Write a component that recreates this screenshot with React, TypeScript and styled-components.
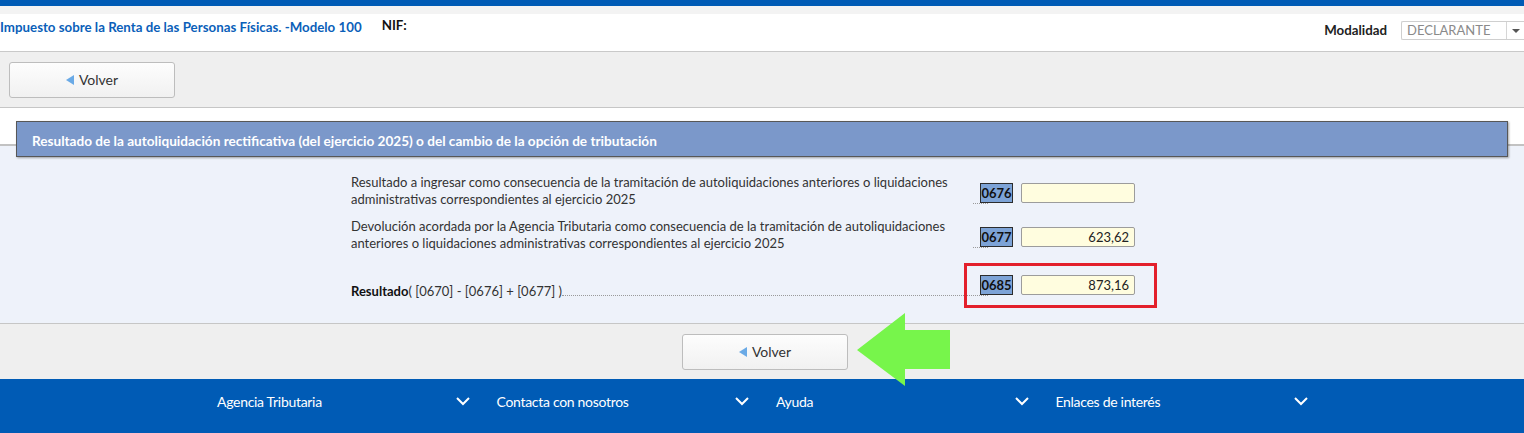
import * as React from "react";
import styled, { createGlobalStyle } from "styled-components";

const aeatBlue = "#005bb5";
const font = `"Lato", "Noto Sans", sans-serif`;

const GlobalStyle = createGlobalStyle`
  html, body {
    margin: 0;
    padding: 0;
    background: #fff;
    font-family: ${font};
  }
`;

const Page = styled.div`
  width: 1524px;
  height: 433px;
  overflow: hidden;
  display: flex;
  flex-direction: column;
`;

const TopStripe = styled.div`
  height: 6px;
  background: ${aeatBlue};
  border-bottom: 8px solid #f3f3f3;
`;

const Header = styled.div`
  height: 32px;
  display: flex;
  align-items: flex-start;
  padding-top: 5px;
  border-bottom: 1px solid #c9c9c9;
  font-size: 13.3px;
  line-height: 17px;
  .title {
    color: #0b5fb9;
    font-weight: 700;
  }
  .nif {
    margin-left: 20px;
    font-weight: 700;
    color: #111;
    margin-top: -2px;
  }
  .modalidad {
    margin-left: auto;
    display: flex;
    align-items: center;
    gap: 14px;
    margin-top: 2px;
    font-weight: 700;
    color: #222;
    margin-right: -1px;
  }
`;

const Select = styled.div`
  width: 124px;
  height: 19px;
  border: 1px solid #cfcfcf;
  border-right: none;
  border-radius: 2px 0 0 2px;
  display: flex;
  align-items: center;
  font-weight: 400;
  color: #8a8a8a;
  font-size: 13px;
  padding-left: 5px;
  box-sizing: border-box;
  background: #fff;
  span {
    flex: 1;
  }
  i {
    width: 18px;
    height: 100%;
    border-left: 1px solid #d6d6d6;
    display: flex;
    align-items: center;
    justify-content: center;
  }
  i::after {
    content: "";
    border-left: 4px solid transparent;
    border-right: 4px solid transparent;
    border-top: 4px solid #555;
  }
`;

const Toolbar = styled.div<{ $center?: boolean }>`
  height: 55px;
  flex-shrink: 0;
  background: #efefef;
  display: flex;
  align-items: center;
  justify-content: ${(p) => (p.$center ? "center" : "flex-start")};
  padding-left: ${(p) => (p.$center ? "6px" : "9px")};
  border-bottom: ${(p) => (p.$center ? "none" : "1px solid #c6c6c6")};
  border-top: ${(p) => (p.$center ? "1px solid #c6c6c6" : "none")};
  position: relative;
`;

const Button = styled.button`
  width: 166px;
  height: 36px;
  border: 1px solid #bdbdbd;
  border-radius: 3px;
  background: linear-gradient(#fdfdfd, #f1f1f1);
  font-family: ${font};
  font-size: 14px;
  color: #333;
  display: flex;
  align-items: center;
  justify-content: center;
  gap: 5px;
  cursor: pointer;
  svg {
    margin-top: 1px;
  }
`;

const Arrow = styled.svg`
  position: absolute;
  left: 857px;
  top: -11px;
`;

const Main = styled.div`
  padding-top: 13px;
  background: linear-gradient(
    to bottom,
    #fff 0 36px,
    #c2c2c2 36px 38px,
    #eef2fa 38px
  );
`;

const PanelTitle = styled.div`
  margin: 0 16px;
  height: 31px;
  background: #7b98ca;
  border: 1px solid #575757;
  box-shadow: 1px 1px 2px rgba(0, 0, 0, 0.35);
  color: #fff;
  font-weight: 700;
  font-size: 13.6px;
  display: flex;
  align-items: center;
  padding-left: 15px;
  padding-top: 3px;
  box-sizing: content-box;
`;

const Rows = styled.div`
  padding: 17px 0 23px 351px;
  display: flex;
  flex-direction: column;
`;

const Row = styled.div<{ $top: number }>`
  display: flex;
  align-items: flex-end;
  margin-top: ${(p) => p.$top}px;
`;

const Label = styled.div`
  width: 637px;
  display: flex;
  align-items: flex-end;
  font-size: 13px;
  line-height: 17px;
  color: #333;
  white-space: nowrap;
  p {
    margin: 0;
    width: 610px;
  }
  b {
    color: #111;
  }
`;

const Leader = styled.span<{ $from: number }>`
  flex: 1;
  margin-left: ${(p) => p.$from}px;
  border-bottom: 1px dotted #9a9a9a;
  margin-bottom: 4px;
`;

const Field = styled.div<{ $top?: number }>`
  position: relative;
  display: flex;
  align-items: center;
  margin-left: -8px;
  gap: 8px;
  align-self: ${(p) => (p.$top !== undefined ? "flex-start" : "flex-end")};
  margin-top: ${(p) => p.$top ?? 0}px;
  margin-bottom: ${(p) => (p.$top !== undefined ? 0 : 5)}px;
`;

const Code = styled.span`
  width: 31px;
  height: 18px;
  background: #7da3d6;
  border: 1px solid #2c2c2c;
  font-weight: 700;
  font-size: 13px;
  color: #111;
  display: flex;
  align-items: center;
  justify-content: center;
`;

const Input = styled.div`
  width: 114px;
  height: 20px;
  box-sizing: border-box;
  border: 1px solid #9c9c9c;
  border-radius: 2px;
  background: #fffddf;
  font-size: 13px;
  color: #222;
  text-align: right;
  padding-right: 5px;
  line-height: 18px;
`;

const Highlight = styled.div`
  position: absolute;
  left: -16px;
  top: -12px;
  width: 193px;
  height: 45px;
  box-sizing: border-box;
  border: 3px solid #e3202b;
`;

const Footer = styled.div`
  flex: 1;
  background: ${aeatBlue};
  display: grid;
  grid-template-columns: repeat(4, 279.5px);
  padding-left: 217px;
  align-items: start;
  padding-top: 14px;
`;

const FooterItem = styled.div`
  display: flex;
  align-items: center;
  justify-content: space-between;
  color: #fff;
  font-size: 14px;
  letter-spacing: -0.3px;
  padding-right: 27px;
`;

const Back = () => (
  <Button>
    <svg width="8" height="10" viewBox="0 0 8 10">
      <polygon points="0,5 8,0 8,10" fill="#6aaae6" />
    </svg>
    Volver
  </Button>
);

const Chevron = () => (
  <svg width="14" height="9" viewBox="0 0 14 9">
    <polyline points="1,1 7,7 13,1" fill="none" stroke="#fff" strokeWidth="2" />
  </svg>
);

const footerLinks = ["Agencia Tributaria", "Contacta con nosotros", "Ayuda", "Enlaces de interés"];

export default function App() {
  return (
    <Page>
      <GlobalStyle />
      <TopStripe />
      <Header>
        <span className="title">Impuesto sobre la Renta de las Personas Físicas. -Modelo 100</span>
        <span className="nif">NIF:</span>
        <div className="modalidad">
          Modalidad
          <Select>
            <span>DECLARANTE</span>
            <i />
          </Select>
        </div>
      </Header>
      <Toolbar>
        <Back />
      </Toolbar>
      <Main>
        <PanelTitle>
          Resultado de la autoliquidación rectificativa (del ejercicio 2025) o del cambio de la opción de tributación
        </PanelTitle>
        <Rows>
          <Row $top={0}>
            <Label>
              <p>
                Resultado a ingresar como consecuencia de la tramitación de autoliquidaciones anteriores o liquidaciones
                <br />
                administrativas correspondientes al ejercicio 2025
              </p>
              <Leader $from={12} />
            </Label>
            <Field $top={9}>
              <Code>0676</Code>
              <Input />
            </Field>
          </Row>
          <Row $top={10}>
            <Label>
              <p>
                Devolución acordada por la Agencia Tributaria como consecuencia de la tramitación de autoliquidaciones
                <br />
                anteriores o liquidaciones administrativas correspondientes al ejercicio 2025
              </p>
              <Leader $from={12} />
            </Label>
            <Field $top={9}>
              <Code>0677</Code>
              <Input>623,62</Input>
            </Field>
          </Row>
          <Row $top={23}>
            <Label>
              <span>
                <b>Resultado</b>( [0670] - [0676] + [0677] )
              </span>
              <Leader $from={0} />
            </Label>
            <Field>
              <Code>0685</Code>
              <Input>873,16</Input>
              <Highlight />
            </Field>
          </Row>
        </Rows>
      </Main>
      <Toolbar $center>
        <Back />
        <Arrow width="93" height="73" viewBox="0 0 93 73">
          <polygon points="0,37 48,0 48,17 93,17 93,56 48,56 48,73" fill="#77f54b" />
        </Arrow>
      </Toolbar>
      <Footer>
        {footerLinks.map((l) => (
          <FooterItem key={l}>
            {l}
            <Chevron />
          </FooterItem>
        ))}
      </Footer>
    </Page>
  );
}
